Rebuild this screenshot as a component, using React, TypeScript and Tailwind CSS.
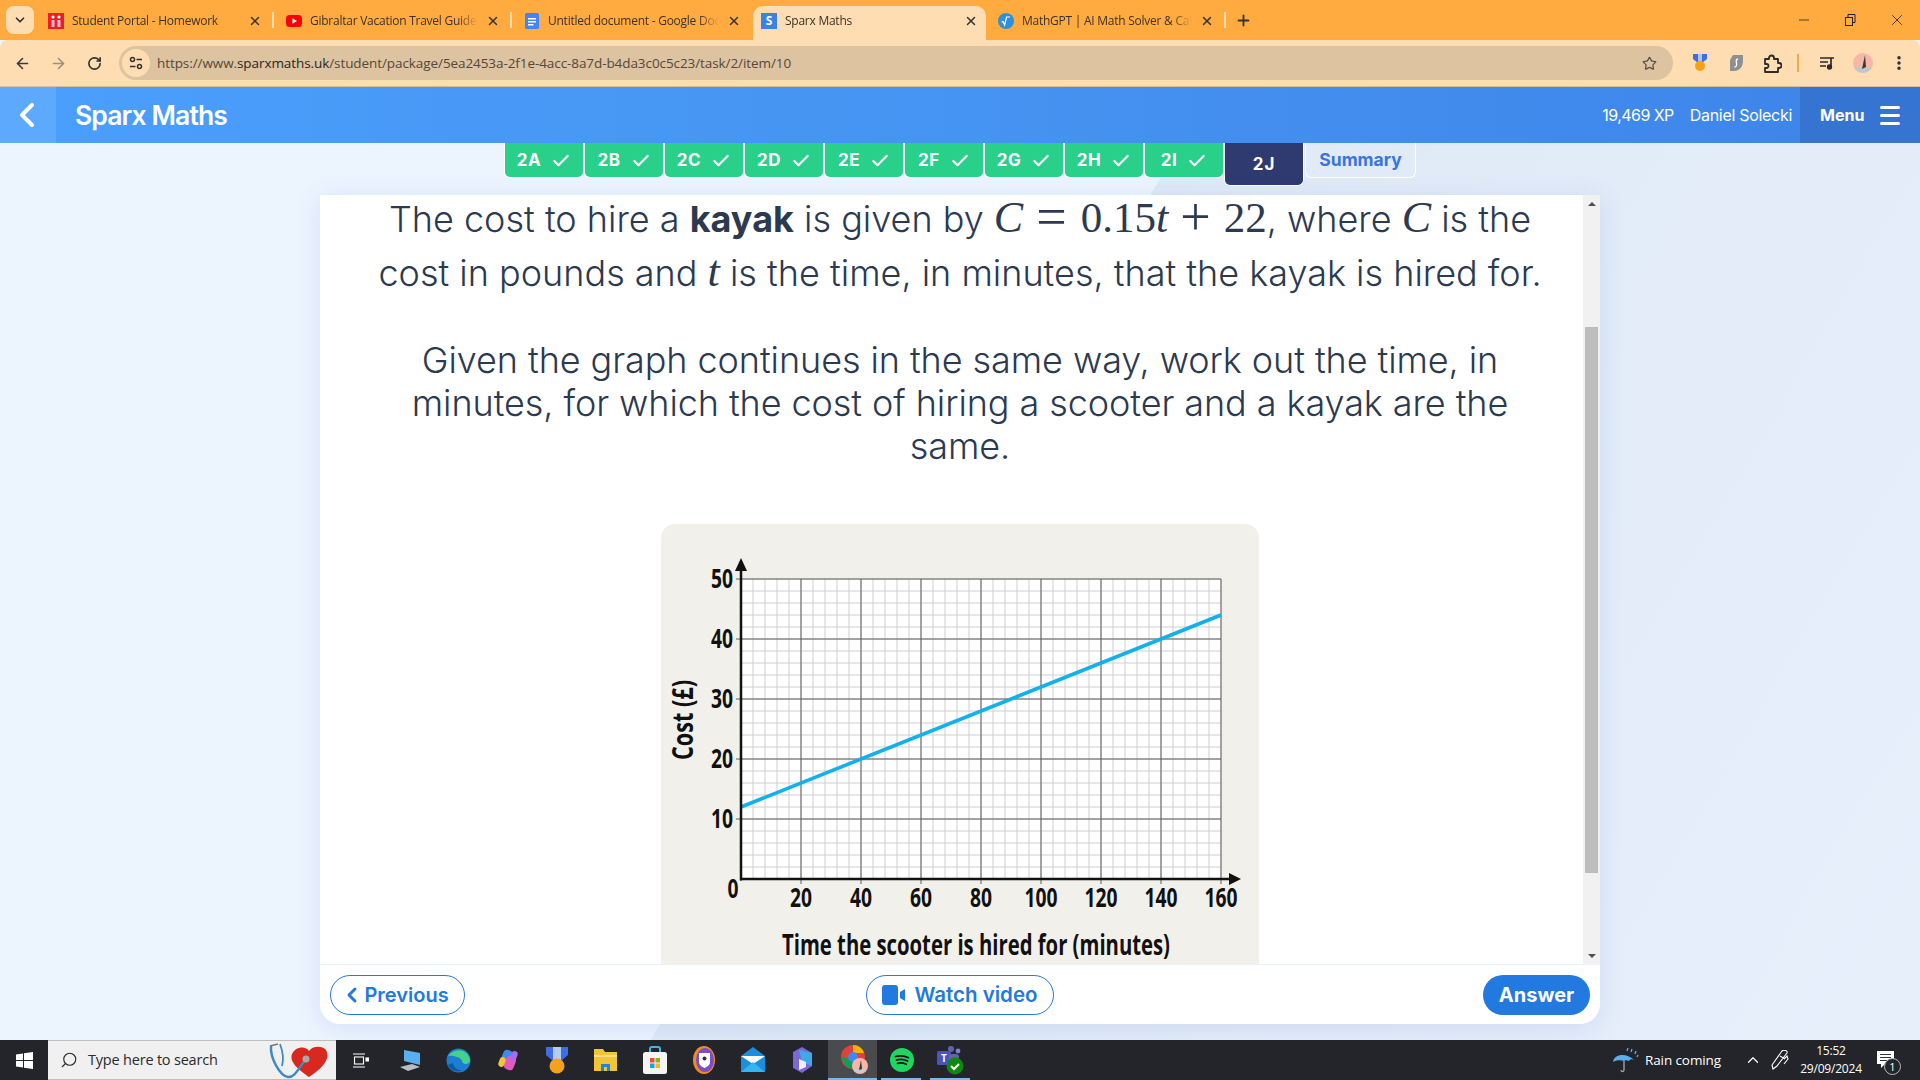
import React from "react";
import { ArrowLeft, ArrowRight, RotateCw, Star, X, Plus, Check, ChevronLeft, ChevronDown, ChevronUp, EllipsisVertical, Minus, Search } from "lucide-react";

const tabs = [
  { t: "Student Portal - Homework", i: "sp", w: "w-[238px]" },
  { t: "Gibraltar Vacation Travel Guide", i: "yt", w: "w-[238px]" },
  { t: "Untitled document - Google Docs", i: "doc", w: "w-[241px]" },
  { t: "Sparx Maths", i: "sx", w: "w-[233px]", active: true },
  { t: "MathGPT | AI Math Solver & Calculator", i: "gpt", w: "w-[240px]" },
];

function Fav({ k }: { k: string }) {
  if (k === "sp") return <svg width="16" height="16" viewBox="0 0 16 16"><rect width="16" height="16" fill="#EE1C25" /><circle cx="5" cy="4" r="1.6" fill="#fff" /><circle cx="11" cy="4" r="1.6" fill="#fff" /><path d="M3.5 7h3v7h-3zM9.5 7h3v7h-3z" fill="#fbc" /></svg>;
  if (k === "yt") return <svg width="16" height="16" viewBox="0 0 16 16"><rect y="2" width="16" height="12" rx="3.5" fill="#F00" /><path d="M6.4 5.2v5.6L11 8z" fill="#fff" /></svg>;
  if (k === "doc") return <svg width="16" height="16" viewBox="0 0 16 16"><rect x="1" width="14" height="16" rx="1.5" fill="#4285F4" /><path d="M4 5h8v1.4H4zM4 8h8v1.4H4zM4 11h5.5v1.4H4z" fill="#fff" /></svg>;
  if (k === "sx") return <div className="w-4 h-4 bg-[#3B82E8] flex items-center justify-center text-white text-[12px] font-bold font-['Open_Sans',sans-serif]">S</div>;
  return <svg width="16" height="16" viewBox="0 0 16 16"><circle cx="8" cy="8" r="8" fill="#2E8FDB" /><path d="M3.5 9l1.5 -.6 1.6 3.6 2-8h3.5" stroke="#fff" strokeWidth="1.2" fill="none" /></svg>;
}

function TabBar() {
  return (
    <div className="h-10 bg-[#FFAB40] flex items-end shrink-0">
      <div className="w-[28px] h-[28px] ml-[6px] mb-[6px] rounded-lg bg-[#FFDDB3] flex items-center justify-center shrink-0 mr-[2px]"><ChevronDown size={14} strokeWidth={3} className="text-[#333]" /></div>
      {tabs.map((t, i) => (
        <div key={t.t} className={`${t.w} h-[34px] pb-[5px] flex items-center shrink-0 relative ${t.active ? "bg-[#FFDDB3] rounded-t-[10px] pl-2 pr-[8px]" : "pl-3 pr-[12px]"}`}>
          <Fav k={t.i} />
          <span className="ml-2 text-[12px] text-[#3b3228] whitespace-nowrap overflow-hidden flex-1 font-['Open_Sans',sans-serif] tracking-[-0.25px] [mask-image:linear-gradient(to_right,black_88%,transparent)]">{t.t}</span>
          <X size={14} strokeWidth={2.5} className="text-[#333] ml-2 shrink-0" />
          {i !== 2 && i !== 3 && <div className="absolute right-0 top-[6px] h-[16px] w-[2px] bg-[#FFDDB3]" />}
        </div>
      ))}
      <div className="w-[36px] h-[34px] pb-[5px] flex items-center justify-center shrink-0 -ml-[1px]"><Plus size={17} strokeWidth={2.6} className="text-[#333]" /></div>
      <div className="flex-1" />
      <div className="flex h-10 items-center shrink-0 pr-[14px] gap-[30px] text-[#222]">
        <Minus size={16} strokeWidth={1.2} />
        <svg width="16" height="16" viewBox="0 0 16 16" fill="none" stroke="currentColor"><rect x="3.5" y="5.5" width="7" height="8" /><path d="M6 5.5V2.5h7v8h-2.5" /></svg>
        <X size={18} strokeWidth={1.1} />
      </div>
    </div>
  );
}

function Toolbar() {
  return (
    <div className="h-[47px] bg-[#FFDDB3] border-b border-[#D7BE9B] rounded-t-[8px] flex items-center shrink-0 relative">
      <ArrowLeft size={17} strokeWidth={2.3} className="ml-[14px] text-[#3a3a3a]" />
      <ArrowRight size={17} strokeWidth={2.3} className="ml-[19px] text-[#A08E78]" />
      <RotateCw size={15} strokeWidth={2.6} className="ml-[20px] text-[#333]" />
      <div className="ml-[17px] w-[1554px] h-[34px] rounded-full bg-[#DDC3A0] flex items-center pl-[3px] pr-[16px]">
        <div className="w-[28px] h-[28px] rounded-full bg-[#FFDDB3] flex items-center justify-center">
          <svg width="14" height="14" viewBox="0 0 14 14" fill="none" stroke="#333" strokeWidth="1.5"><circle cx="3.5" cy="3.5" r="2" /><path d="M7.5 3.5H13M1 10.5h5.5" /><circle cx="10.5" cy="10.5" r="2" /></svg>
        </div>
        <span className="ml-[7px] text-[13.5px] text-[#55483a] font-['Open_Sans',sans-serif] tracking-[-0.08px] whitespace-nowrap">https://www.<span className="text-[#2b2620]">sparxmaths.uk</span>/student/package/5ea2453a-2f1e-4acc-8a7d-b4da3c0c5c23/task/2/item/10</span>
        <div className="flex-1" />
        <Star size={15} strokeWidth={2} className="text-[#55504a]" />
      </div>
      <svg className="ml-[18px]" width="18" height="20" viewBox="0 0 18 20"><path d="M2 1h14v5l-5 4H7L2 6z" fill="#3F6DE8" /><path d="M7 1h4v8H7z" fill="#A9C4F5" /><circle cx="9" cy="13" r="5" fill="#F6A11B" /></svg>
      <svg className="ml-[20px]" width="15" height="18" viewBox="0 0 15 18"><path d="M4 1h10v6c0 6-4 10-9 10H1V6z" fill="#8F8F90" /><path d="M9 5c-2 0-2 2-1.5 4s0 4-2 4" stroke="#fff" strokeWidth="1.3" fill="none" /></svg>
      <svg className="ml-[19px]" width="19" height="19" viewBox="0 0 19 19" fill="none" stroke="#2b2b2b" strokeWidth="1.8" strokeLinejoin="round"><path d="M2 5h4V4a2.5 2.5 0 0 1 5 0v1h4v4h1a2.5 2.5 0 0 1 0 5h-1v4H2v-4h1.5a1.8 1.8 0 0 0 0-4H2z" /></svg>
      <div className="ml-[15px] w-[2px] h-[18px] bg-[#F2A94A]" />
      <svg className="ml-[20px]" width="16" height="16" viewBox="0 0 16 16" fill="none" stroke="#2b2b2b" strokeWidth="1.7"><path d="M1 3h14M1 7h8M1 11h6M12 3v9" /><circle cx="10.5" cy="12" r="1.8" fill="#2b2b2b" /></svg>
      <svg className="ml-[18px]" width="20" height="24" viewBox="0 0 20 24"><circle cx="10" cy="12" r="10" fill="#F6B7A8" /><path d="M1.5 17h17a10 10 0 0 1-17 0z" fill="#BFC6D2" /><path d="M12 4l1 12-4 2z" fill="#37393d" /></svg>
      <EllipsisVertical size={18} strokeWidth={2.6} className="ml-[17px] text-[#2b2b2b]" />
    </div>
  );
}

function Header() {
  return (
    <div className="h-14 bg-[linear-gradient(90deg,#4B9FFC_0%,#4593F2_50%,#3E84E9_100%)] flex items-center shrink-0 text-white">
      <div className="w-14 h-14 bg-[#5CA9FD] flex items-center justify-center"><ChevronLeft size={40} strokeWidth={2.4} className="-ml-[3px]" /></div>
      <div className="ml-[19px] text-[26.5px] font-semibold tracking-[-0.9px] font-['Inter',sans-serif] pt-[1px]">Sparx Maths</div>
      <div className="flex-1" />
      <div className="text-[16px] tracking-[-0.55px] font-['Inter',sans-serif]">19,469 XP</div>
      <div className="ml-[16px] text-[16px] tracking-[-0.3px] font-['Inter',sans-serif]">Daniel Solecki</div>
      <div className="ml-[8px] w-[120px] h-14 bg-[#3674D1] flex items-center pl-5">
        <span className="text-[16px] font-bold font-['Inter',sans-serif]">Menu</span>
        <div className="ml-[16px] flex flex-col gap-[5px]"><div className="w-5 h-[3px] rounded bg-white" /><div className="w-5 h-[3px] rounded bg-white" /><div className="w-5 h-[3px] rounded bg-white" /></div>
      </div>
    </div>
  );
}

function Parts() {
  const list = ["2A", "2B", "2C", "2D", "2E", "2F", "2G", "2H", "2I"];
  return (
    <div className="h-[43px] flex items-start pl-[504px] font-['Inter',sans-serif] shrink-0">
      {list.map((p) => (
        <div key={p} className="w-[80px] h-[35px] pt-[1px] bg-[#28D089] border border-t-0 border-white rounded-b-[6px] flex items-center justify-center gap-[10px] text-white text-[17px] font-bold tracking-[0.6px] shrink-0">
          {p}<Check size={20} strokeWidth={2.6} />
        </div>
      ))}
      <div className="w-[80px] h-[43px] bg-[#2E3A70] border border-t-0 border-white rounded-b-[6px] flex items-center justify-center text-white text-[17px] font-bold tracking-[1px] shrink-0 pt-[2px]">2J</div>
      <div className="ml-[1px] w-[111px] h-[35px] pt-[1px] bg-[#E1EBF7] border border-t-0 border-white rounded-b-[6px] flex items-center justify-center text-[#3A74DF] text-[17.5px] font-bold shrink-0">Summary</div>
    </div>
  );
}

const xv = [20, 40, 60, 80, 100, 120, 140, 160];
const yv = [10, 20, 30, 40, 50];

function Chart() {
  const L = 80, T = 55, R = 560, B = 355;
  const minorX = Array.from({ length: 41 }, (_, i) => L + i * 12);
  const minorY = Array.from({ length: 26 }, (_, i) => T + i * 12);
  const lab = "font-['Open_Sans',sans-serif] font-bold";
  return (
    <svg width="598" height="440" viewBox="0 0 598 440" className="block">
      <rect x={L} y={T} width={R - L} height={B - T} fill="#fff" />
      {minorX.map((x) => <line key={x} x1={x} x2={x} y1={T} y2={B} stroke="#CFCFCF" strokeWidth="1" />)}
      {minorY.map((y) => <line key={y} y1={y} y2={y} x1={L} x2={R} stroke="#CFCFCF" strokeWidth="1" />)}
      {xv.map((v) => { const x = L + v * 3; return <line key={v} x1={x} x2={x} y1={T} y2={B + 5} stroke="#5f5f5f" strokeWidth="1" />; })}
      {yv.map((v) => { const y = B - v * 6; return <line key={v} y1={y} y2={y} x1={L - 5} x2={R} stroke="#5f5f5f" strokeWidth="1" />; })}
      <line x1={L} x2={R} y1={283} y2={91} stroke="#12B1EC" strokeWidth="3.6" />
      <line x1={L} x2={L} y1={44} y2={B + 1.5} stroke="#111" strokeWidth="2.5" />
      <line x1={L - 1} x2={570} y1={B} y2={B} stroke="#111" strokeWidth="2.5" />
      <path d="M80 34l-6 13h12z" fill="#111" />
      <path d="M580 355l-12-6v12z" fill="#111" />
      {yv.map((v) => <text key={v} x={61} y={B - v * 6 + 9} textAnchor="middle" fontSize="26" textLength={22} lengthAdjust="spacingAndGlyphs" fill="#111" className={lab}>{v}</text>)}
      {xv.map((v) => <text key={v} x={L + v * 3} y={383} textAnchor="middle" fontSize="26" textLength={v >= 100 ? 33 : 22} lengthAdjust="spacingAndGlyphs" fill="#111" className={lab}>{v}</text>)}
      <text x={72} y={374} textAnchor="middle" fontSize="26" textLength={11} lengthAdjust="spacingAndGlyphs" fill="#111" className={lab}>0</text>
      <text x={315} y={431} textAnchor="middle" fontSize="28" textLength={388} lengthAdjust="spacingAndGlyphs" fill="#111" className={lab}>Time the scooter is hired for (minutes)</text>
      <text transform="translate(32 196) rotate(-90)" textAnchor="middle" fontSize="28" textLength={80} lengthAdjust="spacingAndGlyphs" fill="#111" className={lab}>Cost (£)</text>
    </svg>
  );
}

function Card() {
  const m = "font-['Liberation_Serif',serif] italic font-normal text-[44px] leading-[0]";
  const n = "font-['Liberation_Serif',serif] font-normal text-[43px] leading-[0]";
  const op = "font-['Liberation_Serif',serif] text-[54px] leading-[0] font-normal relative top-[3px]";
  const body = "text-center text-[36px] text-[#2C3A50] font-['Inter',sans-serif] font-[350] whitespace-nowrap";
  return (
    <div className="w-[1280px] ml-[320px] mt-[9px] h-[829px] bg-white rounded-b-[20px] shadow-[0_4px_24px_rgba(90,130,210,0.16)] flex flex-col overflow-hidden">
      <div className="h-[769px] flex">
        <div className="w-[1263px] pl-[17px] flex flex-col items-center">
          <div className={body}>
            <div className="leading-[48px]">The cost to hire a <b className="font-bold">kayak</b> is given by <span className={m}>C</span><span className={`${op} ml-[13px]`}>=</span><span className={`${n} ml-[14px]`}>0.15</span><span className={m}>t</span><span className={`${op} ml-[12px]`}>+</span><span className={`${n} ml-[13px]`}>22</span>, where <span className={m}>C</span> is the</div>
            <div className="leading-[54px] mt-[3px]">cost in pounds and <span className={m}>t</span> is the time, in minutes, that the kayak is hired for.</div>
          </div>
          <div className={`${body} leading-[43px] mt-[39px] tracking-[-0.08px]`}>
            <div>Given the graph continues in the same way, work out the time, in</div>
            <div>minutes, for which the cost of hiring a scooter and a kayak are the</div>
            <div>same.</div>
          </div>
          <div className="mt-[56px] w-[598px] h-[440px] shrink-0 bg-[#F2F0EA] rounded-t-[14px] overflow-hidden"><Chart /></div>
        </div>
        <div className="w-[17px] bg-[#F1F1F1] flex flex-col items-center">
          <div className="h-[17px] flex items-center justify-center"><div className="w-0 h-0 border-x-[4px] border-x-transparent border-b-[4px] border-b-[#505050]" /></div>
          <div className="mt-[115px] w-[13px] h-[546px] bg-[#BDBDBD]" />
          <div className="flex-1" />
          <div className="h-[17px] flex items-center justify-center"><div className="w-0 h-0 border-x-[4px] border-x-transparent border-t-[4px] border-t-[#505050]" /></div>
        </div>
      </div>
      <div className="h-[60px] border-t border-[#EAF1FB] flex items-center pl-[10px] pr-[10px] font-['Inter',sans-serif]">
        <div className="flex-1 flex">
          <div className="w-[135px] h-[40px] rounded-full border border-[#2279DF] flex items-center justify-center text-[#2279DF] text-[20px] font-semibold pr-[6px]"><ChevronLeft size={24} strokeWidth={3} />Previous</div>
        </div>
        <div className="w-[188px] h-[40px] pt-[1px] rounded-full border border-[#2279DF] flex items-center justify-center gap-[8px] text-[#2279DF] text-[20.5px] font-semibold">
          <svg width="24" height="20" viewBox="0 0 24 20" fill="#2279DF"><rect width="16" height="20" rx="3" /><path d="M18 7l5-3v12l-5-3z" /></svg>Watch video
        </div>
        <div className="flex-1 flex justify-end">
          <div className="w-[107px] h-[40px] rounded-full bg-[#2279DF] flex items-center justify-center text-white text-[20px] font-bold">Answer</div>
        </div>
      </div>
    </div>
  );
}

function Taskbar() {
  const cell = "w-[49px] h-10 flex items-center justify-center shrink-0";
  return (
    <div className="h-10 bg-[#23252A] flex items-center shrink-0 text-white font-['Open_Sans',sans-serif]">
      <div className="w-12 h-10 flex items-center justify-center"><svg width="17" height="17" viewBox="0 0 17 17" fill="#fff"><path d="M0 2.4l7-1v6.6H0zM8 1.2L17 0v8H8zM0 9h7v6.6l-7-1zM8 9h9v8l-9-1.2z" /></svg></div>
      <div className="w-[288px] h-10 bg-[#F0F0F0] border-y border-[#BDBDBD] flex items-center pl-3 relative text-[#2b2b2b]">
        <Search size={18} strokeWidth={1.5} className="-scale-x-100" />
        <span className="ml-[10px] text-[14.5px] tracking-[-0.2px]">Type here to search</span>
        <svg className="absolute left-[220px] top-[1px]" width="66" height="38" viewBox="0 0 66 38"><path d="M24 12c4-8 14-8 17-3 3-5 13-6 17-1 4 7 0 16-17 27C31 28 21 20 24 12z" fill="#D9281F" /><path d="M2 4l8-2" stroke="#777" strokeWidth="1.6" /><path d="M3 4c-1 12 9 30 17 31s12-13 18-17" stroke="#3E8BC4" strokeWidth="2.4" fill="none" /><path d="M12 2c3 8 4 15 2 22" stroke="#3E8BC4" strokeWidth="1.8" fill="none" /><circle cx="38" cy="17" r="3.5" fill="#aaa" /></svg>
      </div>
      <div className={cell}><svg width="17" height="17" viewBox="0 0 17 17" fill="none" stroke="#fff" strokeWidth="1.1"><path d="M1 2h12M1 15h12" /><rect x="2.5" y="5" width="9" height="7" /><rect x="14" y="6" width="2.5" height="3" fill="#fff" /></svg></div>
      <div className={cell}><svg width="24" height="24" viewBox="0 0 24 24"><path d="M6 2l16 3v12L6 13z" fill="#5AB0EE" /><path d="M2 19l12-3 8 3-12 4z" fill="#B9BDC4" /></svg></div>
      <div className={cell}><svg width="25" height="25" viewBox="0 0 25 25"><circle cx="12.5" cy="12.5" r="12" fill="#1B7FD0" /><path d="M2 9c3-8 19-11 22 3 .5 5-8 5-8 1 0-4-14-7-14-4z" fill="#45D08F" /><path d="M7 15c0 5 6 8 10 7-5 3-12 1-15-5z" fill="#0B5AA8" /></svg></div>
      <div className={cell}><svg width="24" height="24" viewBox="0 0 24 24"><rect x="6" y="2" width="10" height="14" rx="4" transform="rotate(20 11 9)" fill="#3E8BF0" /><rect x="9" y="8" width="10" height="14" rx="4" transform="rotate(20 14 15)" fill="#E25ABD" /><rect x="3" y="9" width="6" height="10" rx="3" transform="rotate(20 6 14)" fill="#F3C435" /><rect x="15" y="3" width="6" height="10" rx="3" transform="rotate(20 18 8)" fill="#A76BF0" /></svg></div>
      <div className={cell}><svg width="24" height="28" viewBox="0 0 24 28"><path d="M1 1h22v8l-7 6H8L1 9z" fill="#3F6DE8" /><path d="M8 1h8v13H8z" fill="#B6CCF6" /><circle cx="12" cy="20" r="7.5" fill="#F6A11B" /></svg></div>
      <div className={cell}><svg width="23" height="22" viewBox="0 0 23 22"><path d="M0 0h9l2 3h12v19H0z" fill="#F3C435" /><path d="M7 22v-7h9v7h-3v-4h-3v4z" fill="#1E88D8" /><path d="M0 6h23v2H0z" fill="#FBE08A" /></svg></div>
      <div className={cell}><svg width="24" height="28" viewBox="0 0 24 28"><path d="M7 7V3a2 2 0 0 1 2-2h6a2 2 0 0 1 2 2v4" stroke="#3CB6EE" strokeWidth="2" fill="none" /><rect y="6" width="24" height="22" rx="2.5" fill="#F4F4F4" /><path d="M7 12h4.5v4.5H7z" fill="#E8532B" /><path d="M12.5 12H17v4.5h-4.5z" fill="#7DB82A" /><path d="M7 17.5h4.5V22H7z" fill="#19A2EA" /><path d="M12.5 17.5H17V22h-4.5z" fill="#FBBA0A" /></svg></div>
      <div className={cell}><svg width="22" height="28" viewBox="0 0 22 28"><ellipse cx="11" cy="14" rx="11" ry="14" fill="#F08B1E" /><ellipse cx="12" cy="14" rx="9" ry="12" fill="#7B4DC9" /><path d="M6 7h11v9c0 3-3 5-5.5 6C9 21 6 19 6 16z" fill="#fff" /><circle cx="11.5" cy="12.5" r="2" fill="#333" /></svg></div>
      <div className={cell}><svg width="24" height="28" viewBox="0 0 24 28"><path d="M0 10L12 1l12 9v16H0z" fill="#1B8FDC" /><path d="M0 10h24L12 18z" fill="#fff" /><path d="M0 26l12-10 12 10z" fill="#35B4F0" /></svg></div>
      <div className={cell}><svg width="20" height="26" viewBox="0 0 20 26"><path d="M10 0l10 6v13l-10 7-9-5V5z" fill="#7C67D6" /><path d="M7 3l13 3v13l-10-4z" fill="#3FA8E8" /><path d="M7 12l7 3v5l-7 3z" fill="#EFEFFF" /></svg></div>
      <div className="w-[49px] h-10 ml-[2px] bg-[#4A4B4F] flex items-center justify-center relative border-b-[2px] border-[#76B9ED]">
        <svg className="ml-[4px]" width="28" height="32" viewBox="0 0 28 32"><circle cx="12" cy="14" r="12" fill="#DB4437" /><path d="M12 2a12 12 0 0 1 11 8H12z" fill="#F4B400" /><path d="M1 14a12 12 0 0 0 12 12l3-8z" fill="#0F9D58" /><circle cx="12" cy="14" r="5" fill="#4285F4" /><circle cx="19" cy="23" r="8" fill="#F6B7A8" /><path d="M12.6 26h13a8 8 0 0 1-13 0z" fill="#C4CAD4" /><path d="M20 17l1 9-3 1z" fill="#333" /></svg>
      </div>
      <div className="w-[49px] h-10 flex items-center justify-center relative"><div className="absolute bottom-0 left-[4px] right-[5px] h-[2px] bg-[#76B9ED]" />
        <svg width="24" height="24" viewBox="0 0 24 24"><circle cx="12" cy="12" r="12" fill="#1ED760" /><path d="M5.5 8.5c4.5-1.2 9-.8 13 1.2M6.5 12c3.8-1 7.5-.7 11 1M7.5 15.3c3-.8 6-.5 8.8.9" stroke="#111" strokeWidth="1.8" fill="none" strokeLinecap="round" /></svg>
      </div>
      <div className="w-[49px] h-10 flex items-center justify-center relative"><div className="absolute bottom-0 left-[4px] right-[5px] h-[2px] bg-[#76B9ED]" />
        <svg width="28" height="30" viewBox="0 0 28 30"><circle cx="14" cy="4" r="3" fill="#6264A7" /><circle cx="21" cy="6" r="2.4" fill="#7B83C9" /><rect x="0" y="6" width="14" height="14" rx="1.5" fill="#4B53BC" /><rect x="12" y="9" width="10" height="12" rx="3" fill="#6264A7" /><text x="7" y="17" textAnchor="middle" fontSize="10" fontWeight="700" fill="#fff">T</text><circle cx="18" cy="21" r="8.5" fill="#0F8A0F" /><path d="M14 21l3 3 5-5" stroke="#fff" strokeWidth="2" fill="none" /></svg>
      </div>
      <div className="flex-1" />
      <svg width="28" height="28" viewBox="0 0 28 28"><path d="M1 16C2 8 14 6 22 14c-2-1-4-1-5 1-2-1-4-1-5 0-3-1-8-1-11 1z" fill="#5AB0EE" /><path d="M12 15v9c0 2-3 2-3 0" stroke="#aaa" strokeWidth="1.3" fill="none" /><path d="M16 2l-1 3M20 3l-1 3M24 5l-1 3M26 9l-1 2" stroke="#5AB0EE" strokeWidth="1.3" /></svg>
      <span className="ml-[5px] text-[13.5px] tracking-[-0.1px]">Rain coming</span>
      <ChevronUp size={18} strokeWidth={1.6} className="ml-[23px]" />
      <svg className="ml-[9px]" width="18" height="20" viewBox="0 0 18 20" fill="none" stroke="#fff" strokeWidth="1.1"><path d="M11 1L1 15l1 4 4-3L16 3c1-2-3-4-5-2zM9 6l5 3M13 9l3-3 1 3-4 5" /></svg>
      <div className="ml-[12px] w-[60px] flex flex-col items-center text-[12px] leading-[18px] tracking-[-0.2px]"><span>15:52</span><span className="whitespace-nowrap">29/09/2024</span></div>
      <div className="ml-[16px] w-[28px] h-10 relative mr-[15px]">
        <svg className="absolute left-0 top-[11px]" width="17" height="17" viewBox="0 0 17 17"><path d="M0 0h17v13H8l-4 4v-4H0z" fill="#fff" /><path d="M3 3.5h11M3 6.5h11M3 9.5h7" stroke="#333" strokeWidth="1" /></svg>
        <div className="absolute left-[7px] top-[18px] w-[17px] h-[17px] rounded-full border border-[#bbb] bg-[#23252A] flex items-center justify-center text-[11px] leading-none">1</div>
      </div>
    </div>
  );
}

export default function App() {
  return (
    <div className="w-[1920px] h-[1080px] flex flex-col overflow-hidden bg-[#ECF4FE]">
      <TabBar />
      <Toolbar />
      <Header />
      <div className="flex-1 flex flex-col min-h-0 bg-[linear-gradient(120.6deg,#ECF4FE_48.2%,#DFE9F6_48.2%,#E7EFFB_100%)]">
        <Parts />
        <Card />
      </div>
      <Taskbar />
    </div>
  );
}
